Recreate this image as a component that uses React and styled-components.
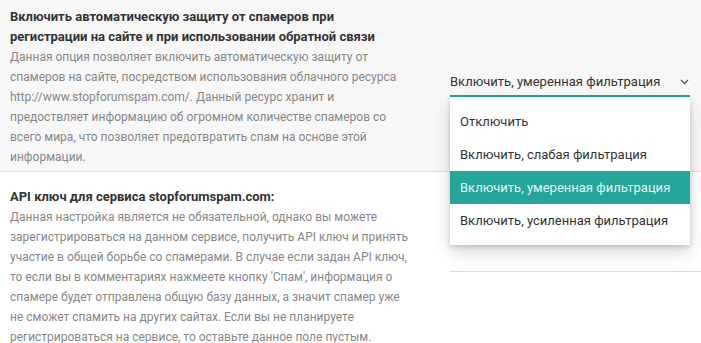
import React from "react";
import styled, { createGlobalStyle } from "styled-components";

const GlobalStyle = createGlobalStyle`
  html, body { margin: 0; padding: 0; background: #ffffff; overflow: hidden; }
  body { font-family: Roboto, "Noto Sans", sans-serif; color: #333; }
`;

const Page = styled.div`
  width: 701px;
  height: 343px;
  overflow: hidden;
  position: relative;
`;

const Setting = styled.section`
  display: flex;
  align-items: center;
  background: ${(p) => (p.$shaded ? "#f7f7f7" : "#ffffff")};
  border-bottom: ${(p) => (p.$shaded ? "1px solid #e2e2e2" : "none")};
  padding: ${(p) => p.$pad};
  position: relative;
  z-index: ${(p) => (p.$shaded ? 2 : 1)};
`;

const Info = styled.div`
  width: 430px;
  flex: none;
  padding-left: 10px;
  box-sizing: border-box;
`;

const Title = styled.h3`
  margin: 0;
  font-size: 13px;
  font-weight: 700;
  line-height: 20px;
  color: #333333;
  white-space: nowrap;
`;

const Desc = styled.p`
  margin: 0;
  font-size: 12px;
  line-height: 20px;
  color: #878787;
  white-space: nowrap;
`;

const Control = styled.div`
  margin-left: 20px;
  margin-bottom: ${(p) => p.$lift}px;
  position: relative;
  flex: none;
  width: ${(p) => p.$w}px;
`;

const SelectBox = styled.div`
  display: flex;
  align-items: center;
  justify-content: space-between;
  height: 20px;
  padding-bottom: 3px;
  border-bottom: 2px solid #26a69a;
  font-size: 13px;
  line-height: 20px;
  color: #333333;
  cursor: pointer;
`;

const Chevron = styled.svg`
  width: 9px;
  height: 6px;
  margin-right: 1px;
  flex: none;
`;

const Menu = styled.ul`
  position: absolute;
  top: 100%;
  left: 0;
  width: 100%;
  margin: 0;
  padding: 8px 0;
  list-style: none;
  background: #ffffff;
  box-shadow: 0 2px 5px rgba(0, 0, 0, 0.16), 0 8px 16px rgba(0, 0, 0, 0.14);
  z-index: 10;
`;

const Option = styled.li`
  height: 33px;
  display: flex;
  align-items: center;
  padding-left: 10px;
  font-size: 13px;
  color: ${(p) => (p.$active ? "#e6f4f2" : "#333333")};
  background: ${(p) => (p.$active ? "#26a69a" : "transparent")};
`;

const TextInput = styled.div`
  height: 26px;
  border-bottom: 1px solid #dcdcdc;
`;

const lines1 = [
  "Данная опция позволяет включить автоматическую защиту от",
  "спамеров на сайте, посредством использования облачного ресурса",
  "http://www.stopforumspam.com/. Данный ресурс хранит и",
  "предоствляет информацию об огромном количестве спамеров со",
  "всего мира, что позволяет предотвратить спам на основе этой",
  "информации.",
];

const lines2 = [
  "Данная настройка является не обязательной, однако вы можете",
  "зарегистрироваться на данном сервисе, получить API ключ и принять",
  "участие в общей борьбе со спамерами. В случае если задан API ключ,",
  "то если вы в комментариях нажмеете кнопку 'Спам', информация о",
  "спамере будет отправлена общую базу данных, а значит спамер уже",
  "не сможет спамить на других сайтах. Если вы не планируете",
  "регистрироваться на сервисе, то оставьте данное поле пустым.",
];

const options = [
  "Отключить",
  "Включить, слабая фильтрация",
  "Включить, умеренная фильтрация",
  "Включить, усиленная фильтрация",
];

function Lines({ items }) {
  return items.map((l, i) => (
    <React.Fragment key={i}>
      {l}
      {i < items.length - 1 && <br />}
    </React.Fragment>
  ));
}

export default function App() {
  return (
    <Page>
      <GlobalStyle />
      <Setting $shaded $pad="7px 0 4px 0">
        <Info>
          <Title>
            Включить автоматическую защиту от спамеров при
            <br />
            регистрации на сайте и при использовании обратной связи
          </Title>
          <Desc>
            <Lines items={lines1} />
          </Desc>
        </Info>
        <Control $w={240} $lift={5}>
          <SelectBox>
            <span>Включить, умеренная фильтрация</span>
            <Chevron viewBox="0 0 9 6">
              <polyline points="1,1 4.5,4.5 8,1" fill="none" stroke="#555" strokeWidth="1.3" />
            </Chevron>
          </SelectBox>
          <Menu>
            {options.map((o, i) => (
              <Option key={o} $active={i === 2}>
                {o}
              </Option>
            ))}
          </Menu>
        </Control>
      </Setting>
      <Setting $pad="15px 0 4px 0">
        <Info>
          <Title>API ключ для сервиса stopforumspam.com:</Title>
          <Desc>
            <Lines items={lines2} />
          </Desc>
        </Info>
        <Control $w={270} $lift={18}>
          <TextInput />
        </Control>
      </Setting>
    </Page>
  );
}
